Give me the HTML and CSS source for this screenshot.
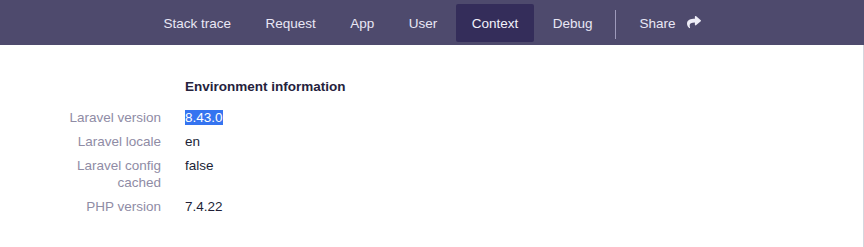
FILE: index.html
```html
<!DOCTYPE html>
<html>
<head>
<meta charset="utf-8">
<link rel="stylesheet" href="styles.css">
</head>
<body>
<nav class="nav">
  <a class="nav-item">Stack trace</a>
  <a class="nav-item">Request</a>
  <a class="nav-item">App</a>
  <a class="nav-item">User</a>
  <a class="nav-item active">Context</a>
  <a class="nav-item">Debug</a>
  <span class="nav-divider"></span>
  <a class="nav-item share">Share
    <svg class="share-icon" viewBox="0 0 512 512" width="14" height="14" aria-hidden="true"><path fill="currentColor" d="M503.691 189.836L327.687 37.851C312.281 24.546 288 35.347 288 56.015v80.053C127.371 137.907 0 170.1 0 322.326c0 61.441 39.581 122.309 83.333 154.132 13.653 9.931 33.111-2.533 28.077-18.631C66.066 312.814 132.917 274.316 288 272.085V360c0 20.7 24.3 31.453 39.687 18.164l176.004-152c11.071-9.562 11.086-26.753 0-36.328z"/></svg>
  </a>
</nav>
<main class="page">
  <section class="info">
    <h3 class="info-title">Environment information</h3>
    <dl class="defs">
      <dt>Laravel version</dt><dd><span class="selected">8.43.0</span></dd>
      <dt>Laravel locale</dt><dd>en</dd>
      <dt>Laravel config cached</dt><dd>false</dd>
      <dt>PHP version</dt><dd>7.4.22</dd>
    </dl>
  </section>
</main>
</body>
</html>
```

FILE: styles.css
```css
html, body {
  margin: 0;
  padding: 0;
  background: #ffffff;
}
body {
  font-family: "Liberation Sans", Arial, sans-serif;
  font-size: 13.5px;
  line-height: 17px;
  height: 247px;
  overflow: hidden;
  display: flex;
  flex-direction: column;
}
.nav {
  height: 45px;
  background: #4e4a6d;
  display: flex;
  justify-content: center;
  align-items: center;
  gap: 2.5px;
  flex: none;
}
.nav-item {
  color: #e9e7f5;
  padding: 0 16px;
  height: 38px;
  display: flex;
  align-items: center;
  border-radius: 2px;
  text-decoration: none;
  margin-top: 1px;
}
.nav-item.active {
  background: #342d5a;
  color: #f2f1fa;
}
.nav-divider {
  width: 1px;
  height: 29px;
  background: #9e9abb;
  margin: 4px 5px 0 4px;
}
.share {
  padding-left: 16px;
}
.share-icon {
  margin-left: 11px;
  margin-top: -3px;
  color: #eeedf7;
}
.page {
  flex: 1;
  border-right: 1px solid #d6d6de;
  padding: 33px 0 0 61px;
}
.info-title {
  margin: 0 0 14px 124px;
  font-size: 13.5px;
  line-height: 17px;
  font-weight: bold;
  color: #25223c;
}
.defs {
  margin: 0;
  display: grid;
  grid-template-columns: 100px auto;
  column-gap: 24px;
  row-gap: 7px;
}
.defs dt {
  text-align: right;
  color: #8f8ca5;
}
.defs dd {
  margin: 0;
  color: #211f37;
}
.selected {
  background: #3574f0;
  color: #ffffff;
}
```
